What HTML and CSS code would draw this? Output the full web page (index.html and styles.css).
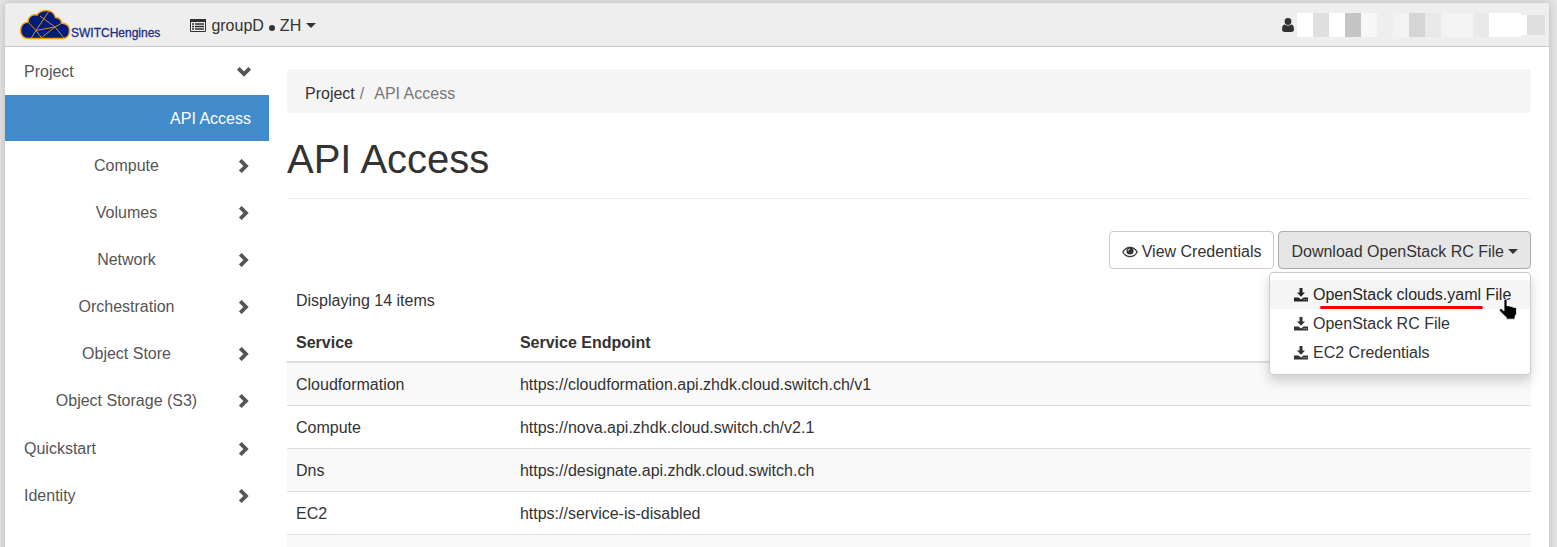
FILE: index.html
```html
<!DOCTYPE html>
<html lang="en">
<head>
<meta charset="utf-8">
<title>API Access - SWITCHengines</title>
<link rel="stylesheet" href="styles.css">
</head>
<body>
<svg class="defs" aria-hidden="true">
  <symbol id="chevron" viewBox="0 0 10 14"><path d="M1.300 1.300 7 7 1.300 12.700" fill="none" stroke="currentColor" stroke-width="3.800"/></symbol>
  <symbol id="download" viewBox="0 0 14 14"><path d="M5.500 0h3v4.500H11L7 8.800 3 4.500h2.500zM0 9.500h4.500L7 11.500l2.500-2H14V13.500H0z" fill="currentColor"/><path d="M9.500 11.700h1M11.800 11.700h1" stroke="#fff" stroke-width=".8"/></symbol>
</svg>
<div class="page">
  <header class="topbar">
    <a class="brand" href="#" aria-label="SWITCHengines">
      <svg class="cloud" viewBox="0 0 52 32" aria-hidden="true">
        <path d="M9 29.500C4.500 29.500 1.500 26 1.500 21.500c0-4.500 3-8 7.500-8.500 0-5 4-8 9-7C20 3 24 1.500 27.500 1.500c4.500 0 8 3 9 7 4 0 6 3 6 5.500 5 .5 8 3.500 8 7.500 0 5-3 8-7 8z" fill="#011b7c" stroke="#f6a01a" stroke-width="1.500"/>
        <path d="M9 13l8 8.500M17 21.500 36 18M36 18 21 7M17 21.500l-5 8M17 21.500l6 8M17 21.500 30 2M36 18 22 29M36 18l7-4M36 18l9 11" fill="none" stroke="#d98b20" stroke-width="1"/>
      </svg>
      <span class="brand-name">SWITCHengines</span>
    </a>
    <button class="context" type="button">
      <svg class="list-icon" viewBox="0 0 16 13" aria-hidden="true"><path d="M.5 1.500h15v11H.5z" fill="none" stroke="currentColor"/><path d="M0 0h16v3H0z" fill="currentColor"/><path d="M2 5h2M5 5h9M2 7.500h2M5 7.500h9M2 10h2M5 10h9" stroke="currentColor" stroke-width="1.300"/></svg>
      <span>groupD</span><i class="dot"></i><span>ZH</span><i class="caret"></i>
    </button>
    <button class="user" type="button" aria-label="User">
      <svg class="user-icon" viewBox="0 0 12 14" aria-hidden="true"><path d="M2.500 6.500C1 7 0 8.800 0 11c0 1.800 1 3 2.500 3h7c1.500 0 2.500-1.200 2.500-3 0-2.200-1-4-2.500-4.500C7.500 8 4.500 8 2.500 6.500z" fill="currentColor"/><circle cx="6" cy="3.500" r="3.400" fill="currentColor"/></svg>
      <span class="mosaic"><i class="m1"></i><i class="m2"></i><i class="m1"></i><i class="m3"></i><i class="m4"></i><i></i><i class="m5"></i><i class="m6"></i><i class="m7"></i><i class="m5"></i><i class="m5"></i><i class="m7"></i><i class="m1"></i><i class="m1"></i><i class="m8"></i></span>
    </button>
  </header>
  <div class="body">
    <nav class="sidebar">
      <a class="item" href="#"><span>Project</span><svg class="chev open"><use href="#chevron"/></svg></a>
      <a class="item active" href="#">API Access</a>
      <div class="group">
        <a class="item sub" href="#"><span>Compute</span><svg class="chev"><use href="#chevron"/></svg></a>
        <a class="item sub" href="#"><span>Volumes</span><svg class="chev"><use href="#chevron"/></svg></a>
        <a class="item sub" href="#"><span>Network</span><svg class="chev"><use href="#chevron"/></svg></a>
        <a class="item sub" href="#"><span>Orchestration</span><svg class="chev"><use href="#chevron"/></svg></a>
        <a class="item sub" href="#"><span>Object Store</span><svg class="chev"><use href="#chevron"/></svg></a>
        <a class="item sub" href="#"><span>Object Storage (S3)</span><svg class="chev"><use href="#chevron"/></svg></a>
      </div>
      <a class="item" href="#"><span>Quickstart</span><svg class="chev"><use href="#chevron"/></svg></a>
      <a class="item" href="#"><span>Identity</span><svg class="chev"><use href="#chevron"/></svg></a>
    </nav>
    <main class="content">
      <nav class="crumbs" aria-label="Breadcrumb"><a href="#">Project</a><span class="sep">/</span><span>API Access</span></nav>
      <h1>API Access</h1>
      <div class="actions">
        <button class="btn" type="button">
          <svg class="eye" viewBox="0 0 16 12" aria-hidden="true"><path d="M.8 6C4.500-.2 11.500-.2 15.200 6 11.500 12.200 4.500 12.200.8 6z" fill="none" stroke="currentColor" stroke-width="1.300"/><circle cx="8" cy="5" r="3.600" fill="currentColor"/><path d="M6 5a2 2 0 0 1 2-2" fill="none" stroke="#fff" stroke-width=".8"/></svg>
          View Credentials</button>
        <div class="dropdown">
          <button class="btn pressed" type="button" aria-expanded="true">Download OpenStack RC File<i class="caret"></i></button>
          <div class="menu">
            <a class="hover" href="#"><svg class="dl"><use href="#download"/></svg>OpenStack clouds.yaml File</a>
            <a href="#"><svg class="dl"><use href="#download"/></svg>OpenStack RC File</a>
            <a href="#"><svg class="dl"><use href="#download"/></svg>EC2 Credentials</a>
            <i class="underline"></i>
            <svg class="pointer" viewBox="0 0 20 22" aria-hidden="true"><path d="M6 1.500C6-.2 9-.2 9 1.500V7l2-.5 1 1 2-.3 1 1.200 2-.2 1.500 1.500v5l-1.500 3v2.500H8.500v-1.500L2 12.500c-1.500-2 .3-3.500 2-2.500l2 2z" fill="#000" stroke="#fff" stroke-width=".8"/></svg>
          </div>
        </div>
      </div>
      <table>
        <caption>Displaying 14 items</caption>
        <thead><tr><th scope="col">Service</th><th scope="col">Service Endpoint</th></tr></thead>
        <tbody>
          <tr><td>Cloudformation</td><td>https://cloudformation.api.zhdk.cloud.switch.ch/v1</td></tr>
          <tr><td>Compute</td><td>https://nova.api.zhdk.cloud.switch.ch/v2.1</td></tr>
          <tr><td>Dns</td><td>https://designate.api.zhdk.cloud.switch.ch</td></tr>
          <tr><td>EC2</td><td>https://service-is-disabled</td></tr>
          <tr><td></td><td></td></tr>
        </tbody>
      </table>
    </main>
  </div>
</div>
</body>
</html>
```
FILE: styles.css
```css
* { box-sizing: border-box; }
html { height: 100%; overflow: hidden; }
body {
  margin: 0;
  height: 100%;
  overflow: hidden;
  padding: 3px 8px 0 5px;
  background: #e4e4e4;
  color: #333;
  font: 16px/22px "Liberation Sans", Arial, sans-serif;
}
a { color: inherit; text-decoration: none; }
button { font: inherit; color: inherit; cursor: pointer; }
.defs { position: absolute; width: 0; height: 0; }
.page {
  min-height: 100%;
  background: #fff;
  border-radius: 4px 4px 0 0;
  box-shadow: 0 0 10px rgba(0, 0, 0, .2);
}
.topbar {
  display: flex;
  align-items: center;
  height: 44px;
  padding: 0 4px 0 14px;
  background: #eee;
  border-bottom: 1px solid #c8c8c8;
  border-radius: 4px 4px 0 0;
}
.brand { display: flex; align-items: flex-end; color: #1c2f87; }
.cloud { width: 52px; height: 32px; }
.brand-name { font-size: 12px; line-height: 16px; -webkit-text-stroke: 0.3px; }
.context, .user { display: flex; align-items: center; border: 0; padding: 0; background: none; }
.context { margin-left: 30px; gap: 5px; padding-top: 2px; }
.list-icon { width: 16px; height: 13px; }
.dot { width: 6px; height: 6px; border-radius: 50%; background: #333; margin-top: 4px; }
.caret { display: inline-block; border: 5px solid transparent; border-top-color: currentColor; border-bottom: 0; }
.user { margin-left: auto; gap: 3px; }
.user-icon { width: 12px; height: 14px; }
.mosaic { display: flex; align-items: center; height: 24px; }
.mosaic i { width: 16px; height: 24px; }
.mosaic .m1 { background: #fff; }
.mosaic .m2 { background: #dfdfdf; }
.mosaic .m3 { background: #c5c5c5; }
.mosaic .m4 { background: #f7f7f7; }
.mosaic .m5 { background: #f3f3f3; }
.mosaic .m6 { background: #d5d5d5; }
.mosaic .m7 { background: #e9e9e9; }
.mosaic .m8 { width: 24px; height: 20px; background: #dfdfdf; border-left: 6px solid #fff; }

.body { display: flex; }
.sidebar { flex: 0 0 264px; padding-top: 1px; color: #555; }
.item { display: flex; align-items: center; height: 47px; padding: 1px 19px 0; }
.item span { flex: 1; }
.item.active { justify-content: flex-end; height: 46px; padding: 2px 18px 0; background: #428bca; color: #fff; }
.group { padding: 1px 0; }
.sub span { text-align: center; }
.chev { width: 10px; height: 14px; margin: 0 1px 0 10px; }
.chev.open { transform: rotate(90deg); }

.content { flex: 1; min-width: 0; padding: 22px 18px 0; }
.crumbs { display: flex; padding: 14px 18px 8px; background: #f5f5f5; border-radius: 4px; color: #777; }
.crumbs a { color: #333; }
.sep { margin: 0 10px 0 5px; }
h1 { margin: 23px 0 32px; padding-bottom: 15px; border-bottom: 1px solid #eee; font-size: 40px; line-height: 47px; font-weight: 400; }
.actions { display: flex; justify-content: flex-end; gap: 4px; }
.btn {
  display: flex;
  align-items: center;
  gap: 4px;
  height: 38px;
  padding: 3px 12px 0;
  background: #fff;
  border: 1px solid #ccc;
  border-radius: 4px;
}
.btn.pressed { background: #e6e6e6; border-color: #adadad; }
.eye { width: 16px; height: 12px; }
.dropdown { position: relative; }
.menu {
  position: absolute;
  z-index: 2;
  top: 41px;
  right: 0;
  width: 262px;
  padding: 7px 0;
  background: #fff;
  border: 1px solid #ccc;
  border-radius: 4px;
  box-shadow: 0 6px 12px rgba(0, 0, 0, .18);
}
.menu a { display: flex; align-items: center; gap: 5px; height: 29px; padding-left: 24px; white-space: nowrap; }
.menu a.hover { background: #f5f5f5; color: #262626; }
.dl { width: 14px; height: 14px; }
.underline { position: absolute; left: 50px; top: 33px; width: 163px; height: 3px; border-radius: 2px; background: #f30000; }
.pointer { position: absolute; left: 228px; top: 26px; width: 20px; height: 22px; }

table { width: 100%; border-collapse: collapse; table-layout: fixed; }
caption { text-align: left; padding: 21px 9px 9px; }
th, td { height: 43px; padding: 3px 9px 0; text-align: left; border-bottom: 1px solid #ddd; }
th { height: 41px; border-bottom-width: 2px; }
th:first-child { width: 18%; }
tbody tr:nth-child(odd) { background: #f9f9f9; }
```
